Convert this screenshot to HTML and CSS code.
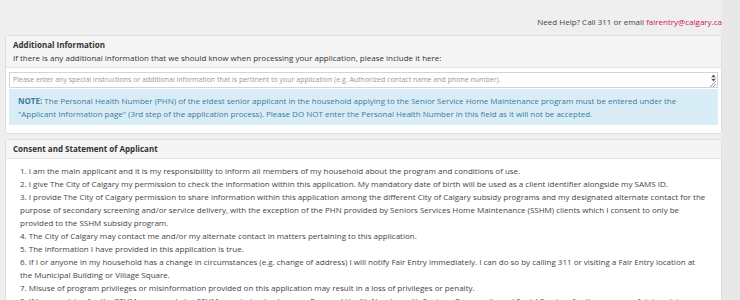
FILE: index.html
```html
<!DOCTYPE html>
<html lang="en">
<head>
    <meta charset="UTF-8">
    <title>Fair Entry Application</title>
    <link rel="stylesheet" href="styles.css">
</head>
<body>

    <div class="page">
        <!-- help line -->
        <div class="help">
            Need Help? Call 311 or email <a href="#">fairentry@calgary.ca</a>
        </div>

        <!-- additional info -->
        <div class="panel">
            <div class="panel-heading">
                <h3>Additional Information</h3>
                <p>If there is any additional information that we should know when processing your application, please include it here:</p>
            </div>
            <div class="panel-body">
                <div class="field">
                    <textarea placeholder="Please enter any special instructions or additional information that is pertinent to your application (e.g. Authorized contact name and phone number)."></textarea>
                    <span class="spin">
                        <svg width="5" height="8" viewBox="0 0 5 8"><path d="M0.5 3 L2.5 0.5 L4.5 3 Z M0.5 5 L2.5 7.5 L4.5 5 Z" fill="#555"/><rect x="0" y="3.6" width="5" height="0.8" fill="#999"/></svg>
                    </span>
                    <span class="grip">
                        <svg width="6" height="6" viewBox="0 0 6 6"><path d="M6 0 L0 6 M6 3 L3 6" stroke="#777" stroke-width="0.8"/></svg>
                    </span>
                </div>
                <div class="alert">
                    <b>NOTE:</b> The Personal Health Number (PHN) of the eldest senior applicant in the household applying to the Senior Service Home Maintenance program must be entered under the "Applicant Information page" (3rd step of the application process). Please DO NOT enter the Personal Health Number in this field as it will not be accepted.
                </div>
            </div>
        </div>

        <!-- consent -->
        <div class="panel">
            <div class="panel-heading">
                <h3>Consent and Statement of Applicant</h3>
            </div>
            <div class="panel-body consent">
                1. I am the main applicant and it is my responsibility to inform all members of my household about the program and conditions of use.<br>
                2. I give The City of Calgary my permission to check the information within this application. My mandatory date of birth will be used as a client identifier alongside my SAMS ID.<br>
                3. I provide The City of Calgary permission to share information within this application among the different City of Calgary subsidy programs and my designated alternate contact for the purpose of secondary screening and/or service delivery, with the exception of the PHN provided by Seniors Services Home Maintenance (SSHM) clients which I consent to only be provided to the SSHM subsidy program.<br>
                4. The City of Calgary may contact me and/or my alternate contact in matters pertaining to this application.<br>
                5. The information I have provided in this application is true.<br>
                6. If I or anyone in my household has a change in circumstances (e.g. change of address) I will notify Fair Entry immediately. I can do so by calling 311 or visiting a Fair Entry location at the Municipal Building or Village Square.<br>
                7. Misuse of program privileges or misinformation provided on this application may result in a loss of privileges or penalty.<br>
                8. If I am applying for the SSHM program, I give SSHM permission to share my Personal Health Number with Seniors, Community and Social Services for the purpose of determining eligibility.
            </div>
        </div>
    </div>

    <div class="strip"></div>

</body>
</html>
```

FILE: styles.css
```css
body {
    margin: 0;
    display: flex;
    height: 300px;
    overflow: hidden;
    background-color: #efefef;
    font-family: "Open Sans", sans-serif;
    font-size: 8px;
    line-height: 13px;
    color: #333;
}

.page {
    width: 717px;
    padding-left: 5px;
}

.strip {
    flex: 1;
    background-color: #e8e8e8;
}

/* help line */
.help {
    text-align: right;
    padding: 15px 0 7px;
    height: 13px;
    color: #444;
}

.help a {
    color: #c8204a;
    text-decoration: none;
}

/* panels */
.panel {
    background-color: #fff;
    border: 1px solid #dedede;
    border-radius: 3px;
    margin-bottom: 5px;
}

.panel-heading {
    background-color: #f5f5f5;
    border-bottom: 1px solid #e4e4e4;
    padding: 2px 7px 3px;
}

.panel-heading h3 {
    margin: 0;
    font-size: 8px;
    font-weight: bold;
    line-height: 13px;
}

.panel-heading p {
    margin: 0;
}

.panel-body {
    padding: 4px 3px 8px;
}

.field {
    position: relative;
    height: 16px;
}

.field textarea {
    display: block;
    box-sizing: border-box;
    width: 100%;
    height: 16px;
    margin: 0;
    padding: 1px 3px;
    border: 1px solid #d4d4d4;
    resize: none;
    overflow: hidden;
    font-family: "Open Sans", sans-serif;
    font-size: 7px;
    line-height: 12px;
}

.field textarea::placeholder {
    color: #999;
}

.spin {
    position: absolute;
    right: 2px;
    top: 2px;
    line-height: 0;
}

.grip {
    position: absolute;
    right: 2px;
    bottom: 1px;
    line-height: 0;
}

.alert {
    margin-top: 1px;
    padding: 5px 9px;
    background-color: #d9edf7;
    color: #3a7ba0;
    line-height: 13px;
}

.consent {
    padding: 5px 14px;
    color: #444;
}
```
